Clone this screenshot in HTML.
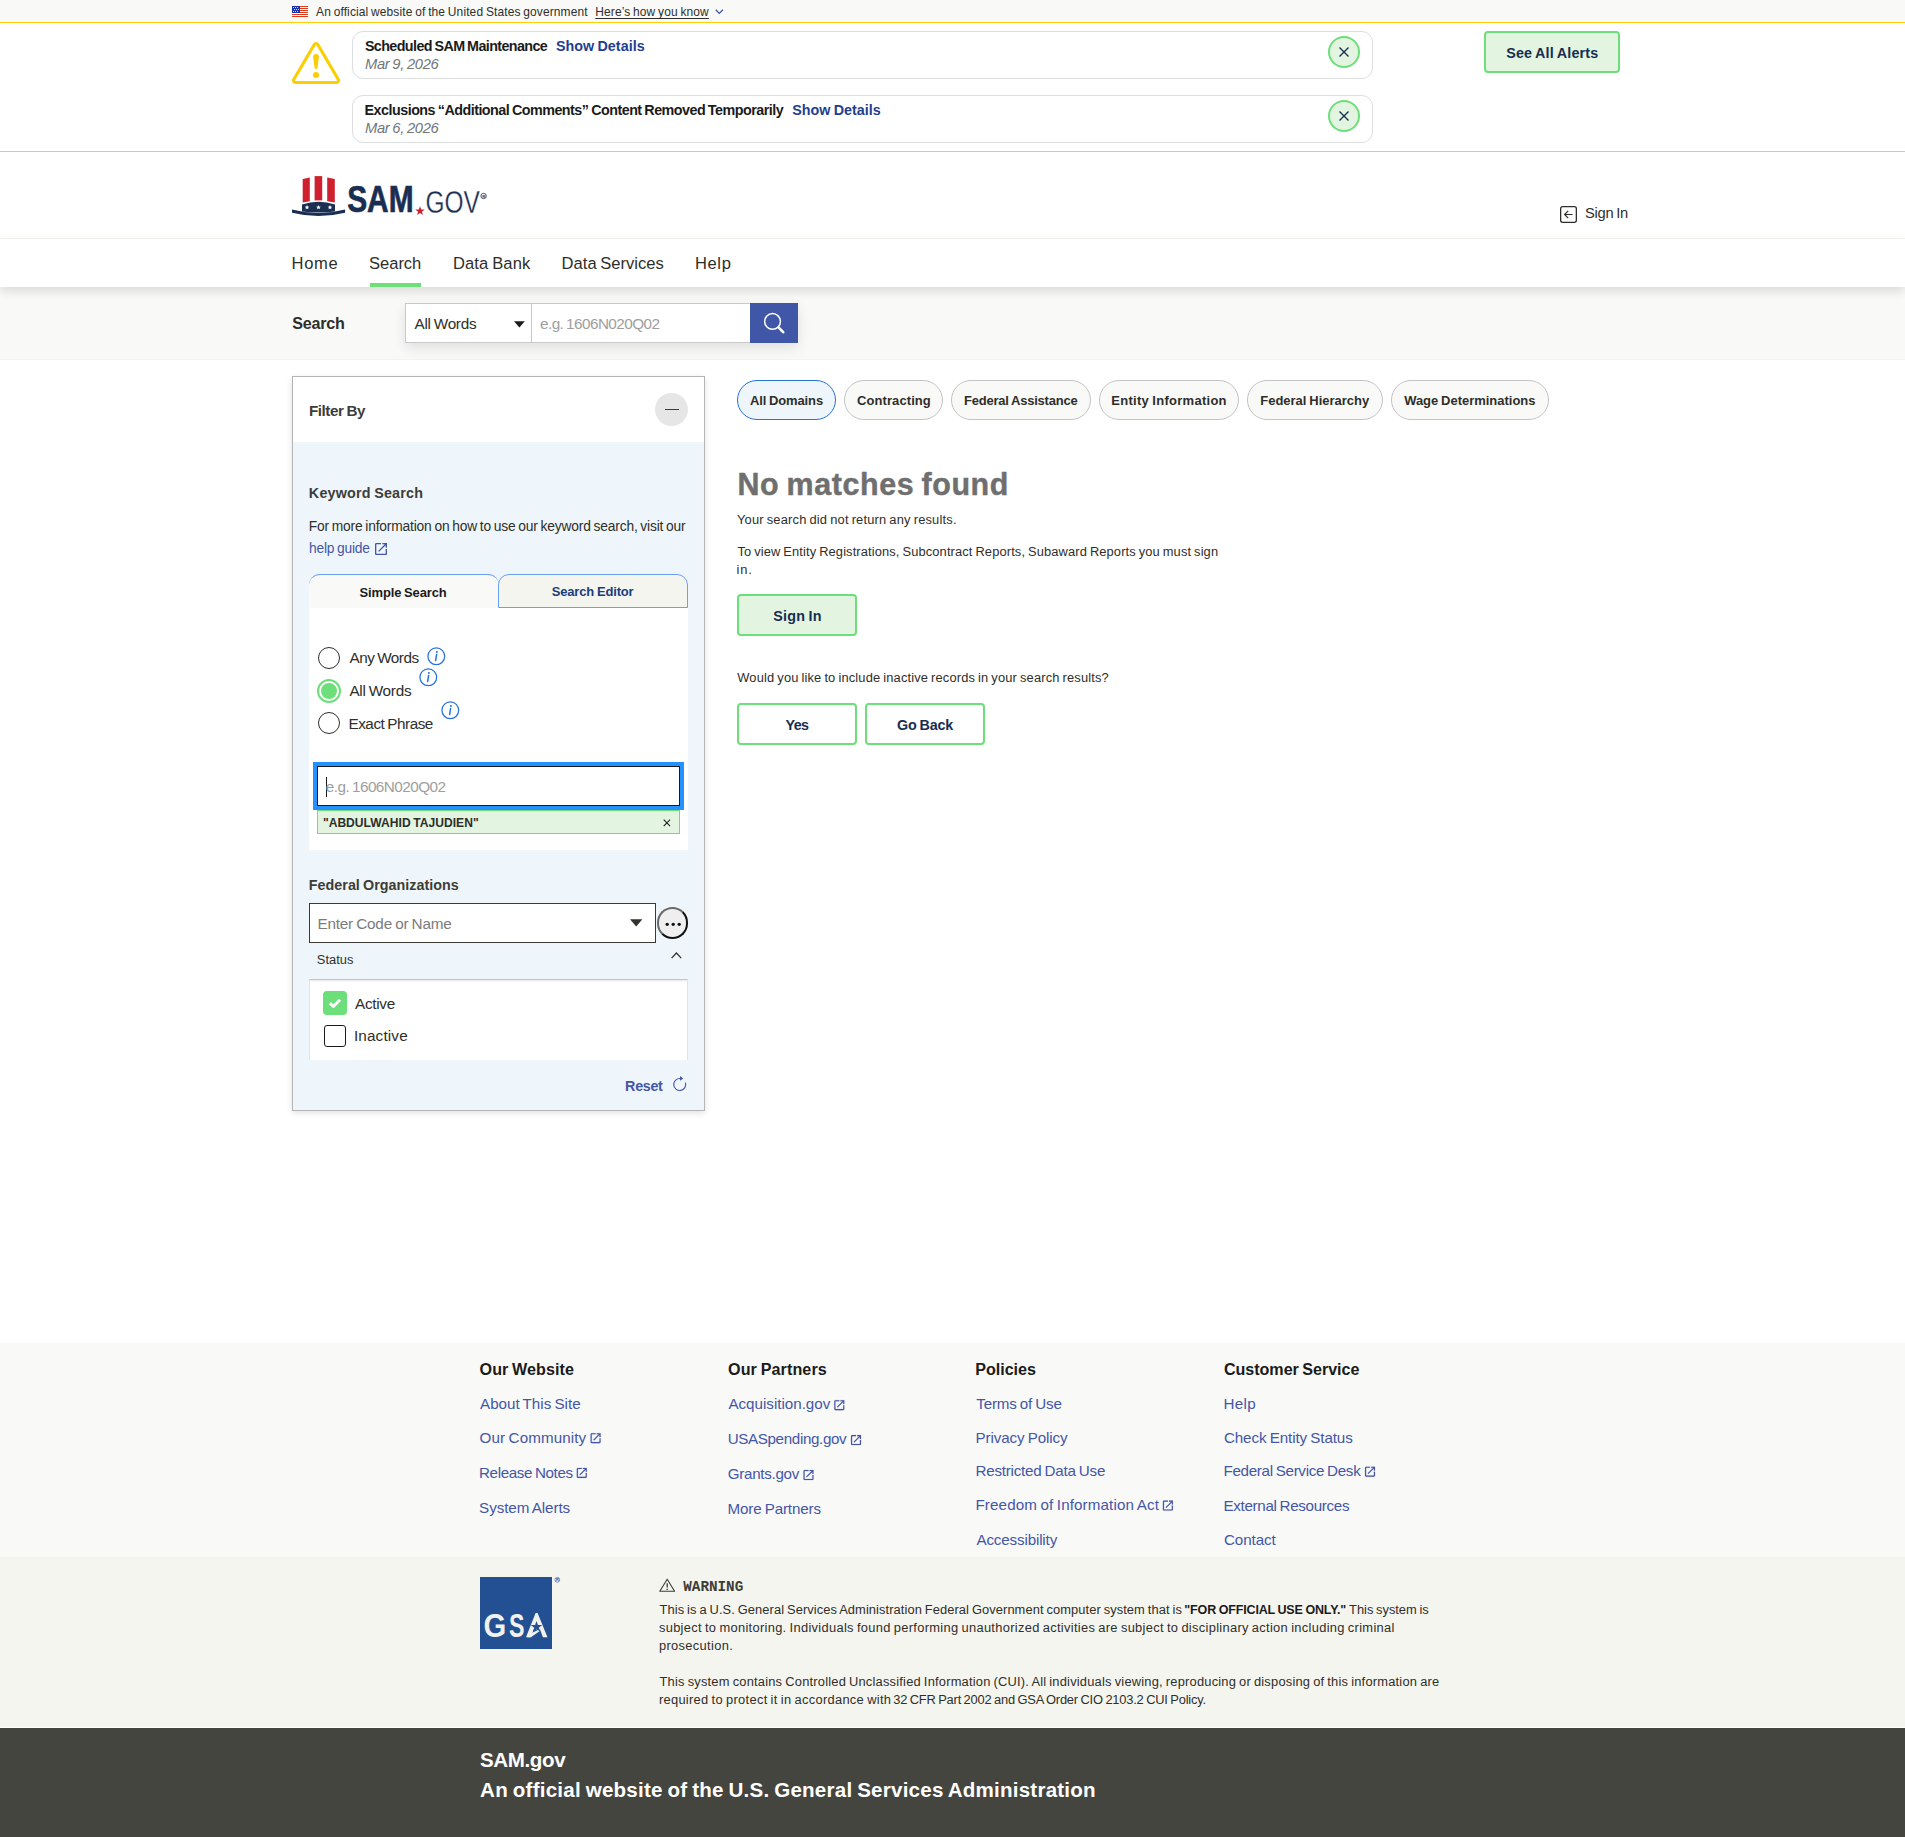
<!DOCTYPE html>
<html lang="en">
<head>
<meta charset="utf-8">
<title>SAM.gov | Search</title>
<style>
*{box-sizing:border-box;margin:0;padding:0}
html,body{width:1905px;height:1837px;overflow:hidden;background:#fff}
body{position:relative;font-family:"Liberation Sans",sans-serif;color:#2e2e2a}
.a{position:absolute;display:block}
.t{position:absolute;white-space:nowrap;line-height:1;font-family:"Liberation Sans",sans-serif}
svg{position:absolute;overflow:visible}
.card{border:1px solid #dcdee0;border-radius:11px;background:#fff}
.xbtn{width:32px;height:32px;border-radius:50%;border:2px solid #6cdf7b;background:#e3f5e1}
.gbtn{border:2px solid #6cdf7b;border-radius:4px;background:#e3f5e1}
.wbtn{border:2px solid #6cdf7b;border-radius:4px;background:#fff}
.pill{height:40px;top:380px;border:1px solid #c4c4c4;border-radius:20px;background:#f9f9f7}
.radio{width:22px;height:22px;border-radius:50%;border:1.8px solid #2e2e2a;background:#fff}
</style>
</head>
<body>
<!-- gov banner -->
<div class="a" style="left:0;top:0;width:1905px;height:22px;background:#f9f9f7"></div>
<svg style="left:292px;top:6px" width="16" height="11" viewBox="0 0 16 11">
<rect width="16" height="11" fill="#fff"/>
<g fill="#db3e1f"><rect y="0" width="16" height="1"/><rect y="2" width="16" height="1"/><rect y="4" width="16" height="1"/><rect y="6" width="16" height="1"/><rect y="8" width="16" height="1"/><rect y="10" width="16" height="1"/></g>
<rect width="8" height="7" fill="#1a31b0"/><g fill="#fff"><circle cx="1.5" cy="1.5" r=".55"/><circle cx="3.5" cy="1.5" r=".55"/><circle cx="5.5" cy="1.5" r=".55"/><circle cx="2.5" cy="3.5" r=".55"/><circle cx="4.5" cy="3.5" r=".55"/><circle cx="6.5" cy="3.5" r=".55"/><circle cx="1.5" cy="5.5" r=".55"/><circle cx="3.5" cy="5.5" r=".55"/><circle cx="5.5" cy="5.5" r=".55"/></g>
</svg>
<svg style="left:715px;top:9.3px" width="9" height="6" viewBox="0 0 9 6"><path d="M0.7 0.8 L4.3 4.4 L7.9 0.8" fill="none" stroke="#3f57a6" stroke-width="1.3"/></svg>

<!-- alerts -->
<div class="a" style="left:0;top:22px;width:1905px;height:130px;border-top:1px solid #fccf0b;border-bottom:1px solid #fccf0b;background:#fff"></div>
<svg style="left:290px;top:38px" width="52" height="50" viewBox="290 38 52 50">
<path d="M314.32 44.44 A2 2 0 0 1 317.78 44.44 L338.33 79.44 A2 2 0 0 1 336.61 82.45 L295.49 82.45 A2 2 0 0 1 293.77 79.44 Z" fill="none" stroke="#face00" stroke-width="3.1" stroke-linejoin="round"/>
<path d="M313.1 56.8 A2.9 2.9 0 0 1 318.9 56.8 L317.5 67.6 A1.5 1.5 0 0 1 314.5 67.6 Z" fill="#face00"/>
<circle cx="316" cy="75" r="3.05" fill="#face00"/>
</svg>
<div class="a card" style="left:352px;top:31px;width:1021px;height:47.5px"></div>
<div class="a card" style="left:352px;top:95px;width:1021px;height:47.5px"></div>
<div class="a xbtn" style="left:1328px;top:36px"></div>
<div class="a xbtn" style="left:1328px;top:100px"></div>
<svg style="left:1339px;top:47px" width="10" height="10" viewBox="0 0 10 10"><path d="M0.5 0.5 L9.5 9.5 M9.5 0.5 L0.5 9.5" stroke="#162e51" stroke-width="1.4"/></svg>
<svg style="left:1339px;top:111px" width="10" height="10" viewBox="0 0 10 10"><path d="M0.5 0.5 L9.5 9.5 M9.5 0.5 L0.5 9.5" stroke="#162e51" stroke-width="1.4"/></svg>
<div class="a gbtn" style="left:1484px;top:31px;width:136px;height:41.5px"></div>

<!-- header -->
<svg style="left:290px;top:172px" width="200" height="48" viewBox="290 172 200 48">
<path d="M302.7 179 L309.8 177.4 L309.8 201.2 L302.7 202.6 Z" fill="#cf2030"/>
<path d="M314.6 176.1 L322.2 176.1 L322.2 200.4 L314.6 200.4 Z" fill="#cf2030"/>
<path d="M327.2 177.4 L334.8 179 L334.8 202.6 L327.2 201.2 Z" fill="#cf2030"/>
<path d="M302 204.4 Q318.5 199.2 335 204.4 L335 211.4 Q318.5 213.4 302 211.4 Z" fill="#1a2e52"/>
<g fill="#fff"><path id="st" d="M307 205.0 l0.65 1.55 1.65 0.1 -1.28 1.05 0.42 1.6 -1.44 -0.9 -1.44 0.9 0.42 -1.6 -1.28 -1.05 1.65 -0.1z"/><use href="#st" x="11.5"/><use href="#st" x="23"/></g>
<path d="M292 209.6 Q318.5 216.6 345.1 209.6 L345.1 212.8 Q318.5 219.4 292 212.8 Z" fill="#1a2e52"/>
<text x="347.2" y="212.3" font-family="Liberation Sans, sans-serif" font-weight="700" font-size="37.4" fill="#1a2e52" stroke="#1a2e52" stroke-width="0.7" textLength="66.4" lengthAdjust="spacingAndGlyphs">SAM</text>
<path d="M420 206.2 l1.2 3.3 3.5 0.06 -2.8 2.1 1.04 3.36 -2.94 -2 -2.94 2 1.04 -3.36 -2.8 -2.1 3.5 -0.06z" fill="#cf2030"/>
<text x="425.4" y="212.9" font-family="Liberation Sans, sans-serif" font-weight="400" font-size="30.6" fill="#1a2e52" stroke="#fff" stroke-width="0.3" textLength="54.4" lengthAdjust="spacingAndGlyphs">GOV</text>
<circle cx="483.6" cy="196" r="2.7" fill="none" stroke="#1a2e52" stroke-width="0.8"/>
<text x="482.2" y="197.6" font-family="Liberation Sans, sans-serif" font-weight="700" font-size="4.4" fill="#1a2e52">R</text>
</svg>
<svg style="left:1560px;top:206px" width="17" height="17" viewBox="0 0 17 17">
<rect x="0.65" y="0.65" width="15.7" height="15.7" rx="2" fill="none" stroke="#2e2e2a" stroke-width="1.3"/>
<path d="M12.6 8.5 L4.8 8.5 M8.2 4.9 L4.6 8.5 L8.2 12.1" fill="none" stroke="#2e2e2a" stroke-width="1.2"/>
</svg>
<div class="a" style="left:0;top:238px;width:1905px;height:1px;background:#f5f5f2"></div>

<!-- search strip (under nav shadow) -->
<div class="a" style="left:0;top:287px;width:1905px;height:73px;background:#f9f9f7;border-bottom:1px solid #f3f3ef"></div>
<!-- nav -->
<div class="a" style="left:0;top:239px;width:1905px;height:48px;background:#fff;box-shadow:0 4px 10px rgba(0,0,0,.13)"></div>
<div class="a" style="left:369.75px;top:283px;width:51.25px;height:4px;background:#6cdf7b"></div>

<!-- search group -->
<div class="a" style="left:405px;top:303px;width:393px;height:40px;box-shadow:0 5px 12px rgba(0,0,0,.10)"></div>
<div class="a" style="left:405px;top:303px;width:127px;height:40px;background:#fff;border:1px solid #c9c9c9"></div>
<div class="a" style="left:531px;top:303px;width:220px;height:40px;background:#fff;border:1px solid #c9c9c9"></div>
<div class="a" style="left:750px;top:303px;width:48px;height:40px;background:#4057a8"></div>
<svg style="left:513.6px;top:321px" width="11" height="7" viewBox="0 0 11 7"><path d="M0 0.3 L10.8 0.3 L5.4 6.6 Z" fill="#1b1b1b"/></svg>
<svg style="left:762px;top:311px" width="24" height="24" viewBox="0 0 24 24"><circle cx="10.55" cy="10.45" r="7.9" fill="none" stroke="#fff" stroke-width="1.5"/><path d="M16.5 16.4 L21.2 21.2" stroke="#fff" stroke-width="2.6" stroke-linecap="round"/></svg>

<!-- filter panel -->
<div class="a" style="left:292px;top:376px;width:413px;height:735px;border:1px solid #b5b5b5;background:#eff6fb;box-shadow:0 2px 6px rgba(0,0,0,.12)"></div>
<div class="a" style="left:293px;top:377px;width:411px;height:65px;background:#fff"></div>
<div class="a" style="left:655px;top:393px;width:33px;height:33px;border-radius:50%;background:#e6e6e6"></div>
<div class="a" style="left:665px;top:408.7px;width:14px;height:1.6px;background:#1a3d7c"></div>
<svg style="left:374.9px;top:542.8px" width="12" height="12" viewBox="3 3 18 18"><path d="M19 19H5V5h7V3H5c-1.11 0-2 .9-2 2v14c0 1.1.89 2 2 2h14c1.1 0 2-.9 2-2v-7h-2v7zM14 3v2h3.59l-9.83 9.83 1.41 1.41L19 6.41V10h2V3h-7z" fill="#4456a8"/></svg>
<!-- tabs -->
<div class="a" style="left:309px;top:574px;width:189.5px;height:34px;background:#f9f9f7;border-top:1px solid #69a1f0;border-radius:11px 11px 0 0"></div>
<div class="a" style="left:498px;top:574px;width:190px;height:34px;background:#f5f5f0;border:1px solid #69a1f0;border-radius:11px 11px 0 0"></div>
<div class="a" style="left:309px;top:607.5px;width:379px;height:242.5px;background:#fff"></div>
<!-- radios -->
<div class="a radio" style="left:318px;top:647px"></div>
<div class="a" style="left:317px;top:679px;width:24px;height:24px;border-radius:50%;border:2.4px solid #6cdf7b;background:#fff"></div>
<div class="a" style="left:320.8px;top:682.8px;width:16.4px;height:16.4px;border-radius:50%;background:#6cdf7b"></div>
<div class="a radio" style="left:318px;top:712px"></div>
<!-- info icons -->
<svg style="left:427px;top:647px" width="19" height="19" viewBox="0 0 19 19"><g id="inf"><circle cx="9.3" cy="9.3" r="8.4" fill="none" stroke="#2672de" stroke-width="1.25"/><circle cx="9.9" cy="5" r="1" fill="#2672de"/><path d="M9.6 7.4 L8.6 13.6" stroke="#2672de" stroke-width="1.5" stroke-linecap="round"/></g></svg>
<svg style="left:418.9px;top:668px" width="19" height="19" viewBox="0 0 19 19"><use href="#inf"/></svg>
<svg style="left:441px;top:701px" width="19" height="19" viewBox="0 0 19 19"><use href="#inf"/></svg>
<!-- focused input -->
<div class="a" style="left:313px;top:762.3px;width:371px;height:47.5px;background:#2491ff"></div>
<div class="a" style="left:317px;top:766px;width:363px;height:40px;background:#fff;border:1px solid #1b1b1b"></div>
<div class="a" style="left:326px;top:777px;width:1px;height:20px;background:#1b1b1b"></div>
<!-- chip -->
<div class="a" style="left:317px;top:810px;width:363px;height:23.6px;background:#e3f5e1;border:1px solid #6cdf7b"></div>
<svg style="left:663.4px;top:819.2px" width="8" height="8" viewBox="0 0 8 8"><path d="M0.7 0.7 L7.1 7.1 M7.1 0.7 L0.7 7.1" stroke="#1b1b1b" stroke-width="1.05"/></svg>
<!-- federal orgs -->
<div class="a" style="left:309px;top:903px;width:347px;height:39.6px;background:#fff;border:1px solid #3a3a35"></div>
<svg style="left:629.8px;top:919.3px" width="13" height="8" viewBox="0 0 13 8"><path d="M0 0.2 L12.4 0.2 L6.2 7.6 Z" fill="#33332e"/></svg>
<div class="a" style="left:656.5px;top:907.2px;width:31.6px;height:31.6px;border-radius:50%;border:2.2px solid #111;border-top-color:#6a6a6a;border-left-color:#6a6a6a;background:#efefef"></div>
<svg style="left:665px;top:922px" width="17" height="5" viewBox="0 0 17 5"><circle cx="2.2" cy="2.3" r="1.65" fill="#111"/><circle cx="8.2" cy="2.3" r="1.65" fill="#111"/><circle cx="14.2" cy="2.3" r="1.65" fill="#111"/></svg>
<svg style="left:671.3px;top:952px" width="11" height="7" viewBox="0 0 11 7"><path d="M0.6 6.2 L5.4 1 L10.2 6.2" fill="none" stroke="#2e2e2a" stroke-width="1.2"/></svg>
<div class="a" style="left:309px;top:979px;width:379px;height:81px;background:#fff;border:1px solid #e2e4e6;border-top-color:#c4c6c8;border-bottom:none;box-shadow:inset 0 2px 2px -1px rgba(0,0,0,.10)"></div>
<div class="a" style="left:323.2px;top:991.2px;width:23.6px;height:23.6px;border-radius:4px;background:#6cdf7b"></div>
<svg style="left:323.2px;top:991.2px" width="24" height="24" viewBox="0 0 24 24"><path d="M6.9 12.1 L10.4 15.4 L17 8.7" fill="none" stroke="#fff" stroke-width="2.9" stroke-linejoin="round"/></svg>
<div class="a" style="left:324px;top:1025px;width:22px;height:22px;border-radius:3px;border:1.7px solid #1b1b1b;background:#fff"></div>
<svg style="left:672px;top:1075px" width="16" height="17" viewBox="0 0 16 17"><path d="M8.4 3.55 A6 6 0 1 0 13.45 7.7" fill="none" stroke="#4456a8" stroke-width="1.15"/><path d="M8 1.1 L11.2 3.4 L8 5.7 Z" fill="#4456a8"/></svg>

<!-- pills -->
<div class="a pill" style="left:737px;width:99px;border-color:#2672de;background:#eff6fb"></div>
<div class="a pill" style="left:844.2px;width:98.8px"></div>
<div class="a pill" style="left:951.2px;width:139.6px"></div>
<div class="a pill" style="left:1099.2px;width:139.6px"></div>
<div class="a pill" style="left:1247.3px;width:135.6px"></div>
<div class="a pill" style="left:1391.3px;width:157.7px"></div>
<!-- buttons -->
<div class="a gbtn" style="left:737.2px;top:594.3px;width:119.8px;height:41.4px"></div>
<div class="a wbtn" style="left:737.2px;top:703.2px;width:119.8px;height:41.4px"></div>
<div class="a wbtn" style="left:865px;top:703.2px;width:120px;height:41.4px"></div>

<!-- footer -->
<div class="a" style="left:0;top:1343px;width:1905px;height:214.2px;background:#f9f9f7"></div>
<div class="a" style="left:0;top:1557.2px;width:1905px;height:170.3px;background:#f5f5f0"></div>
<div class="a" style="left:0;top:1727.5px;width:1905px;height:110px;background:#454540"></div>
<svg style="left:0;top:0" width="1905" height="1837" viewBox="0 0 1905 1837"><defs><g id="ext"><path transform="scale(0.556) translate(-3 -3)" d="M19 19H5V5h7V3H5c-1.11 0-2 .9-2 2v14c0 1.1.89 2 2 2h14c1.1 0 2-.9 2-2v-7h-2v7zM14 3v2h3.59l-9.83 9.83 1.41 1.41L19 6.41V10h2V3h-7z" fill="#4456a8" stroke="#4456a8" stroke-width="0.3"/></g></defs>
<use href="#ext" x="590.6" y="1433.2"/>
<use href="#ext" x="576.8" y="1467.9"/>
<use href="#ext" x="834.3" y="1400.2"/>
<use href="#ext" x="851" y="1435.1"/>
<use href="#ext" x="803.5" y="1470"/>
<use href="#ext" x="1162.9" y="1500.6"/>
<use href="#ext" x="1365" y="1466.7"/>
</svg>
<!-- GSA -->
<div class="a" style="left:480px;top:1577px;width:72.2px;height:71.8px;background:#234f93"></div>
<svg style="left:480px;top:1577px" width="82" height="72" viewBox="480 1577 82 72">
<text transform="translate(483.6 1637.2) scale(0.88 1)" font-family="Liberation Sans, sans-serif" font-weight="700" font-size="33.2" fill="#f1f1ed">G</text>
<text transform="translate(509.1 1637.2) scale(0.70 1)" font-family="Liberation Sans, sans-serif" font-weight="700" font-size="33.2" fill="#f1f1ed">S</text>
<path d="M526 1637.2 L535.6 1613 L537.6 1613 L547.5 1637.2 Z" fill="#f1f1ed"/>
<path d="M530.4 1638 L533.7 1629.6 L540.0 1629.6 L543.2 1638 Z" fill="#234f93"/>
<path d="M536.50 1620.90 L537.91 1624.96 L542.21 1625.05 L538.78 1627.64 L540.03 1631.75 L536.50 1629.30 L532.97 1631.75 L534.22 1627.64 L530.79 1625.05 L535.09 1624.96Z" fill="#234f93"/>
<path d="M527.6 1637.2 L530.9 1637.2 L539.5 1631.3 L538.0 1629.9 L531.6 1632.9 Z" fill="#f1f1ed"/>
<circle cx="557.3" cy="1579.8" r="2.4" fill="none" stroke="#234f93" stroke-width="0.6"/>
<text x="556" y="1581.2" font-family="Liberation Sans, sans-serif" font-weight="700" font-size="3.8" fill="#234f93">R</text>
</svg>
<svg style="left:659px;top:1578px" width="17" height="14" viewBox="0 0 17 14"><path d="M8.2 1.2 L15.6 13.2 L0.8 13.2 Z" fill="none" stroke="#3d3d38" stroke-width="1.1" stroke-linejoin="round"/><path d="M8.2 5.2 L8.2 9.4" stroke="#3d3d38" stroke-width="1.3"/><circle cx="8.2" cy="11.2" r="0.8" fill="#3d3d38"/></svg>

<span class="t" style="left:316.09px;top:7px;font-size:11.96px;letter-spacing:0.126px;color:#2e2e2a;word-spacing:-0.725px;">An official website of the United States government</span>
<span class="t" style="left:595.27px;top:7px;font-size:11.96px;letter-spacing:0.124px;color:#2e2e2a;word-spacing:-0.725px;text-decoration:underline;text-underline-offset:1.5px;">Here’s how you know</span>
<span class="t" style="left:364.91px;top:39px;font-size:14.32px;letter-spacing:-0.599px;color:#1b1b1b;word-spacing:-0.781px;font-weight:700;">Scheduled SAM Maintenance</span>
<span class="t" style="left:555.90px;top:39px;font-size:14.32px;letter-spacing:0.041px;color:#1f3f8f;word-spacing:-0.781px;font-weight:700;">Show Details</span>
<span class="t" style="left:364.98px;top:57px;font-size:14.72px;letter-spacing:-0.293px;color:#71767a;word-spacing:-0.892px;font-style:italic;">Mar 9, 2026</span>
<span class="t" style="left:364.59px;top:103px;font-size:14.32px;letter-spacing:-0.510px;color:#1b1b1b;word-spacing:-0.781px;font-weight:700;">Exclusions “Additional Comments” Content Removed Temporarily</span>
<span class="t" style="left:792.21px;top:103px;font-size:14.32px;letter-spacing:0.016px;color:#1f3f8f;word-spacing:-0.781px;font-weight:700;">Show Details</span>
<span class="t" style="left:364.98px;top:121px;font-size:14.72px;letter-spacing:-0.293px;color:#71767a;word-spacing:-0.892px;font-style:italic;">Mar 6, 2026</span>
<span class="t" style="left:1506.28px;top:46px;font-size:14.32px;letter-spacing:0.175px;color:#162e51;word-spacing:-0.781px;font-weight:700;">See All Alerts</span>
<span class="t" style="left:1585.05px;top:206px;font-size:14.72px;letter-spacing:-0.309px;color:#2e2e2a;word-spacing:-0.892px;">Sign In</span>
<span class="t" style="left:291.58px;top:256px;font-size:16.56px;letter-spacing:0.665px;color:#2e2e2a;word-spacing:-1.004px;">Home</span>
<span class="t" style="left:369.03px;top:256px;font-size:16.56px;letter-spacing:-0.025px;color:#2e2e2a;word-spacing:-1.004px;">Search</span>
<span class="t" style="left:452.93px;top:256px;font-size:16.56px;letter-spacing:0.138px;color:#2e2e2a;word-spacing:-1.004px;">Data Bank</span>
<span class="t" style="left:561.58px;top:256px;font-size:16.56px;letter-spacing:0.018px;color:#2e2e2a;word-spacing:-1.004px;">Data Services</span>
<span class="t" style="left:694.93px;top:256px;font-size:16.56px;letter-spacing:0.635px;color:#2e2e2a;word-spacing:-1.004px;">Help</span>
<span class="t" style="left:292.19px;top:315px;font-size:16.11px;letter-spacing:-0.201px;color:#2e2e2a;word-spacing:-0.879px;font-weight:700;">Search</span>
<span class="t" style="left:414.52px;top:316px;font-size:15.3px;letter-spacing:-0.286px;color:#2e2e2a;word-spacing:-0.853px;">All Words</span>
<span class="t" style="left:540.01px;top:316px;font-size:15.3px;letter-spacing:-0.562px;color:#9e9e9e;word-spacing:-0.853px;">e.g. 1606N020Q02</span>
<span class="t" style="left:308.88px;top:403px;font-size:15.21px;letter-spacing:-0.419px;color:#3d3d38;word-spacing:-0.83px;font-weight:700;">Filter By</span>
<span class="t" style="left:308.83px;top:486px;font-size:14.32px;letter-spacing:0.215px;color:#3d3d38;word-spacing:-0.781px;font-weight:700;">Keyword Search</span>
<span class="t" style="left:308.72px;top:520px;font-size:13.8px;letter-spacing:-0.176px;color:#2e2e2a;word-spacing:-0.836px;">For more information on how to use our keyword search, visit our</span>
<span class="t" style="left:309.10px;top:542px;font-size:13.8px;letter-spacing:-0.219px;color:#4456a8;word-spacing:-0.836px;">help guide</span>
<span class="t" style="left:359.52px;top:586px;font-size:12.98px;letter-spacing:-0.120px;color:#1b1b1b;word-spacing:-0.708px;font-weight:700;">Simple Search</span>
<span class="t" style="left:551.70px;top:585px;font-size:12.98px;letter-spacing:-0.136px;color:#1a3d7c;word-spacing:-0.708px;font-weight:700;">Search Editor</span>
<span class="t" style="left:349.43px;top:650px;font-size:15.3px;letter-spacing:-0.497px;color:#2e2e2a;word-spacing:-0.853px;">Any Words</span>
<span class="t" style="left:349.43px;top:683px;font-size:15.3px;letter-spacing:-0.276px;color:#2e2e2a;word-spacing:-0.853px;">All Words</span>
<span class="t" style="left:348.44px;top:716px;font-size:15.3px;letter-spacing:-0.471px;color:#2e2e2a;word-spacing:-0.853px;">Exact Phrase</span>
<span class="t" style="left:325.86px;top:779px;font-size:15.3px;letter-spacing:-0.556px;color:#9e9e9e;word-spacing:-0.853px;">e.g. 1606N020Q02</span>
<span class="t" style="left:322.92px;top:817px;font-size:12.08px;letter-spacing:0.012px;color:#2e2e2a;word-spacing:-0.659px;font-weight:700;">"ABDULWAHID TAJUDIEN"</span>
<span class="t" style="left:308.83px;top:878px;font-size:14.32px;letter-spacing:0.016px;color:#3d3d38;word-spacing:-0.781px;font-weight:700;">Federal Organizations</span>
<span class="t" style="left:317.44px;top:916px;font-size:15.3px;letter-spacing:-0.198px;color:#7c7c7c;word-spacing:-0.853px;">Enter Code or Name</span>
<span class="t" style="left:316.77px;top:954px;font-size:12.88px;letter-spacing:0.048px;color:#2e2e2a;word-spacing:-0.781px;">Status</span>
<span class="t" style="left:355.04px;top:996px;font-size:15.3px;letter-spacing:-0.292px;color:#2e2e2a;word-spacing:-0.853px;">Active</span>
<span class="t" style="left:353.91px;top:1028px;font-size:15.3px;letter-spacing:0.151px;color:#2e2e2a;word-spacing:-0.853px;">Inactive</span>
<span class="t" style="left:625.11px;top:1079px;font-size:14.32px;letter-spacing:-0.316px;color:#4456a8;word-spacing:-0.781px;font-weight:700;">Reset</span>
<span class="t" style="left:749.88px;top:394px;font-size:12.98px;letter-spacing:-0.100px;color:#2e2e2a;word-spacing:-0.708px;font-weight:700;">All Domains</span>
<span class="t" style="left:857.06px;top:394px;font-size:12.98px;letter-spacing:0.096px;color:#2e2e2a;word-spacing:-0.708px;font-weight:700;">Contracting</span>
<span class="t" style="left:963.97px;top:394px;font-size:12.98px;letter-spacing:-0.192px;color:#2e2e2a;word-spacing:-0.708px;font-weight:700;">Federal Assistance</span>
<span class="t" style="left:1111.34px;top:394px;font-size:12.98px;letter-spacing:0.292px;color:#2e2e2a;word-spacing:-0.708px;font-weight:700;">Entity Information</span>
<span class="t" style="left:1260.27px;top:394px;font-size:12.98px;letter-spacing:-0.001px;color:#2e2e2a;word-spacing:-0.708px;font-weight:700;">Federal Hierarchy</span>
<span class="t" style="left:1404.13px;top:394px;font-size:12.98px;letter-spacing:-0.004px;color:#2e2e2a;word-spacing:-0.708px;font-weight:700;">Wage Determinations</span>
<span class="t" style="left:737.50px;top:469px;font-size:30.43px;letter-spacing:0.585px;color:#6f6f6f;word-spacing:-1.66px;font-weight:700;-webkit-text-stroke:0.45px;">No matches found</span>
<span class="t" style="left:736.97px;top:514px;font-size:12.88px;letter-spacing:0.187px;color:#2e2e2a;word-spacing:-0.781px;">Your search did not return any results.</span>
<span class="t" style="left:737.38px;top:546px;font-size:12.88px;letter-spacing:0.122px;color:#2e2e2a;word-spacing:-0.781px;">To view Entity Registrations, Subcontract Reports, Subaward Reports you must sign</span>
<span class="t" style="left:736.62px;top:564px;font-size:12.88px;letter-spacing:0.761px;color:#2e2e2a;word-spacing:-0.781px;">in.</span>
<span class="t" style="left:773.21px;top:609px;font-size:14.32px;letter-spacing:0.240px;color:#162e51;word-spacing:-0.781px;font-weight:700;">Sign In</span>
<span class="t" style="left:737.31px;top:672px;font-size:12.88px;letter-spacing:0.157px;color:#2e2e2a;word-spacing:-0.781px;">Would you like to include inactive records in your search results?</span>
<span class="t" style="left:785.59px;top:718px;font-size:14.32px;letter-spacing:-0.597px;color:#162e51;word-spacing:-0.781px;font-weight:700;">Yes</span>
<span class="t" style="left:897.01px;top:718px;font-size:14.32px;letter-spacing:-0.165px;color:#162e51;word-spacing:-0.781px;font-weight:700;">Go Back</span>
<span class="t" style="left:479.54px;top:1361px;font-size:16.11px;letter-spacing:0.075px;color:#1b1b1b;word-spacing:-0.879px;font-weight:700;">Our Website</span>
<span class="t" style="left:728.00px;top:1361px;font-size:16.11px;letter-spacing:0.102px;color:#1b1b1b;word-spacing:-0.879px;font-weight:700;">Our Partners</span>
<span class="t" style="left:975.36px;top:1361px;font-size:16.11px;letter-spacing:-0.048px;color:#1b1b1b;word-spacing:-0.879px;font-weight:700;">Policies</span>
<span class="t" style="left:1223.92px;top:1361px;font-size:16.11px;letter-spacing:-0.040px;color:#1b1b1b;word-spacing:-0.879px;font-weight:700;">Customer Service</span>
<span class="t" style="left:480.04px;top:1396px;font-size:15.18px;letter-spacing:-0.015px;color:#4456a8;word-spacing:-0.92px;">About This Site</span>
<span class="t" style="left:479.58px;top:1430px;font-size:15.18px;letter-spacing:0.104px;color:#4456a8;word-spacing:-0.92px;">Our Community</span>
<span class="t" style="left:479.04px;top:1465px;font-size:15.18px;letter-spacing:-0.384px;color:#4456a8;word-spacing:-0.92px;">Release Notes</span>
<span class="t" style="left:479.09px;top:1500px;font-size:15.18px;letter-spacing:-0.064px;color:#4456a8;word-spacing:-0.92px;">System Alerts</span>
<span class="t" style="left:728.45px;top:1396px;font-size:15.18px;letter-spacing:-0.016px;color:#4456a8;word-spacing:-0.92px;">Acquisition.gov</span>
<span class="t" style="left:727.64px;top:1431px;font-size:15.18px;letter-spacing:-0.351px;color:#4456a8;word-spacing:-0.92px;">USASpending.gov</span>
<span class="t" style="left:727.83px;top:1466px;font-size:15.18px;letter-spacing:-0.308px;color:#4456a8;word-spacing:-0.92px;">Grants.gov</span>
<span class="t" style="left:727.49px;top:1501px;font-size:15.18px;letter-spacing:-0.139px;color:#4456a8;word-spacing:-0.92px;">More Partners</span>
<span class="t" style="left:976.35px;top:1396px;font-size:15.18px;letter-spacing:-0.184px;color:#4456a8;word-spacing:-0.92px;">Terms of Use</span>
<span class="t" style="left:975.44px;top:1430px;font-size:15.18px;letter-spacing:-0.097px;color:#4456a8;word-spacing:-0.92px;">Privacy Policy</span>
<span class="t" style="left:975.44px;top:1463px;font-size:15.18px;letter-spacing:-0.223px;color:#4456a8;word-spacing:-0.92px;">Restricted Data Use</span>
<span class="t" style="left:975.44px;top:1497px;font-size:15.18px;letter-spacing:0.127px;color:#4456a8;word-spacing:-0.92px;">Freedom of Information Act</span>
<span class="t" style="left:976.43px;top:1532px;font-size:15.18px;letter-spacing:-0.151px;color:#4456a8;word-spacing:-0.92px;">Accessibility</span>
<span class="t" style="left:1223.44px;top:1396px;font-size:15.18px;letter-spacing:0.386px;color:#4456a8;word-spacing:-0.92px;">Help</span>
<span class="t" style="left:1223.91px;top:1430px;font-size:15.18px;letter-spacing:-0.093px;color:#4456a8;word-spacing:-0.92px;">Check Entity Status</span>
<span class="t" style="left:1223.44px;top:1463px;font-size:15.18px;letter-spacing:-0.310px;color:#4456a8;word-spacing:-0.92px;">Federal Service Desk</span>
<span class="t" style="left:1223.44px;top:1498px;font-size:15.18px;letter-spacing:-0.317px;color:#4456a8;word-spacing:-0.92px;">External Resources</span>
<span class="t" style="left:1223.91px;top:1532px;font-size:15.18px;letter-spacing:-0.069px;color:#4456a8;word-spacing:-0.92px;">Contact</span>
<span class="t" style="left:683.27px;top:1580px;font-size:14.3px;letter-spacing:-0.019px;color:#3d3d38;font-weight:700;font-family:'Liberation Mono',monospace;">WARNING</span>
<span class="t" style="left:659.53px;top:1604px;font-size:12.88px;letter-spacing:0.082px;color:#2e2e2a;word-spacing:-0.781px;">This is a U.S. General Services Administration Federal Government computer system that is</span>
<span class="t" style="left:1184.30px;top:1604px;font-size:12.53px;letter-spacing:-0.159px;color:#1b1b1b;word-spacing:-0.683px;font-weight:700;">"FOR OFFICIAL USE ONLY."</span>
<span class="t" style="left:1349.11px;top:1604px;font-size:12.88px;letter-spacing:-0.030px;color:#2e2e2a;word-spacing:-0.781px;">This system is</span>
<span class="t" style="left:658.93px;top:1622px;font-size:12.88px;letter-spacing:0.307px;color:#2e2e2a;word-spacing:-0.781px;">subject to monitoring. Individuals found performing unauthorized activities are subject to disciplinary action including criminal</span>
<span class="t" style="left:658.99px;top:1640px;font-size:12.88px;letter-spacing:0.327px;color:#2e2e2a;word-spacing:-0.781px;">prosecution.</span>
<span class="t" style="left:659.53px;top:1676px;font-size:12.88px;letter-spacing:0.205px;color:#2e2e2a;word-spacing:-0.781px;">This system contains Controlled Unclassified Information (CUI). All individuals viewing, reproducing or disposing of this information are</span>
<span class="t" style="left:658.88px;top:1694px;font-size:12.88px;letter-spacing:0.301px;color:#2e2e2a;word-spacing:-0.781px;">required to protect it in accordance with</span>
<span class="t" style="left:893.24px;top:1694px;font-size:12.88px;letter-spacing:-0.200px;color:#2e2e2a;word-spacing:-0.781px;">32 CFR Part 2002 and GSA Order CIO 2103.2 CUI Policy.</span>
<span class="t" style="left:480.00px;top:1750px;font-size:20.59px;letter-spacing:-0.408px;color:#ffffff;word-spacing:-1.123px;font-weight:700;">SAM.gov</span>
<span class="t" style="left:480.11px;top:1780px;font-size:20.59px;letter-spacing:0.218px;color:#ffffff;word-spacing:-1.123px;font-weight:700;">An official website of the U.S. General Services Administration</span>
</body>
</html>
